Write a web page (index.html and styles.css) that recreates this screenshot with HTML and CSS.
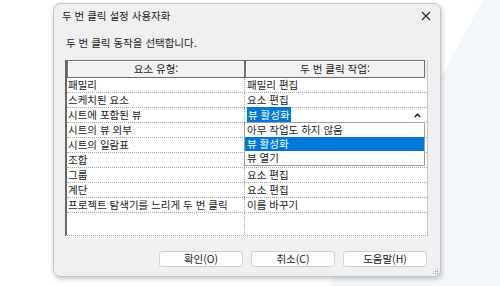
FILE: index.html
```html
<!DOCTYPE html>
<html lang="ko">
<head>
  <meta charset="UTF-8" />
  <meta name="viewport" content="width=device-width, initial-scale=1.0" />
  <title>두 번 클릭 설정 사용자화</title>
  <link rel="stylesheet" href="styles.css">
</head>
<body>
  <div class="dialog">
    <div class="titlebar">
      <span class="title">두 번 클릭 설정 사용자화</span>
      <svg class="close" width="10" height="10" viewBox="0 0 10 10">
        <path d="M1 1 L9 9 M9 1 L1 9" stroke="#222" stroke-width="1.1" fill="none" />
      </svg>
    </div>

    <p class="prompt">두 번 클릭 동작을 선택합니다.</p>

    <div class="grid">
      <div class="head-row">
        <div class="hcell">요소 유형:</div>
        <div class="hcell">두 번 클릭 작업:</div>
      </div>
      <div class="row"><div class="cell">패밀리</div><div class="cell">패밀리 편집</div></div>
      <div class="row"><div class="cell">스케치된 요소</div><div class="cell">요소 편집</div></div>
      <div class="row">
        <div class="cell">시트에 포함된 뷰</div>
        <div class="cell combo">
          <span class="sel">뷰 활성화</span>
          <svg class="caret" width="7" height="5" viewBox="0 0 7 5">
            <path d="M0.8 4 L3.5 1.2 L6.2 4" stroke="#111" stroke-width="1.4" fill="none" />
          </svg>
          <ul class="droplist">
            <li>아무 작업도 하지 않음</li>
            <li class="active">뷰 활성화</li>
            <li>뷰 열기</li>
          </ul>
        </div>
      </div>
      <div class="row"><div class="cell">시트의 뷰 외부</div><div class="cell"></div></div>
      <div class="row"><div class="cell">시트의 일람표</div><div class="cell"></div></div>
      <div class="row"><div class="cell">조합</div><div class="cell"></div></div>
      <div class="row"><div class="cell">그룹</div><div class="cell">요소 편집</div></div>
      <div class="row"><div class="cell">계단</div><div class="cell">요소 편집</div></div>
      <div class="row"><div class="cell">프로젝트 탐색기를 느리게 두 번 클릭</div><div class="cell">이름 바꾸기</div></div>
      <div class="row filler"><div class="cell"></div><div class="cell"></div></div>
    </div>

    <div class="buttons">
      <button>확인(O)</button>
      <button>취소(C)</button>
      <button>도움말(H)</button>
    </div>

    <svg class="grip" width="7" height="7" viewBox="0 0 7 7">
      <rect x="5" y="1" width="1" height="1" fill="#999" />
      <rect x="3" y="3" width="1" height="1" fill="#999" />
      <rect x="5" y="3" width="1" height="1" fill="#999" />
      <rect x="1" y="5" width="1" height="1" fill="#999" />
      <rect x="3" y="5" width="1" height="1" fill="#999" />
      <rect x="5" y="5" width="1" height="1" fill="#999" />
    </svg>
  </div>
</body>
</html>
```

FILE: styles.css
```css
body {
  margin: 0;
  padding: 3px 0 0 53px;
  height: 286px;
  box-sizing: border-box;
  overflow: hidden;
  font-family: "Noto Sans CJK KR", "Noto Sans", sans-serif;
  font-size: 10.5px;
  color: #1b1b1b;
  background: linear-gradient(118deg, #ffffff 0%, #ffffff 74%, #f3f7fb 74%);
}

.dialog {
  position: relative;
  width: 388px;
  height: 274px;
  box-sizing: border-box;
  display: flex;
  flex-direction: column;
  background-color: #f0f0f0;
  border: 1px solid #c4c4c4;
  border-radius: 7px;
  box-shadow: 1px 2px 5px rgba(0, 0, 0, 0.22);
}

.titlebar {
  height: 23px;
  display: flex;
  align-items: center;
  justify-content: space-between;
  padding: 0 9px 0 8px;
}

.title {
  line-height: 14px;
}

.close {
  display: block;
}

.prompt {
  margin: 9px 0 0 12px;
  line-height: 14px;
}

.grid {
  margin: 10px 0 0 11px;
  width: 363px;
  height: 176px;
  box-sizing: border-box;
  display: flex;
  flex-direction: column;
  background-color: #fff;
  border-left: 2px solid #666;
  border-right: 1px solid #c8c8c8;
  border-bottom: 1px dotted #a0a0a0;
}

.head-row {
  display: flex;
  height: 18px;
  flex-shrink: 0;
  background-color: #f0f0f0;
}

.hcell {
  box-sizing: border-box;
  width: 178px;
  border: 1px solid #6e6e6e;
  box-shadow: inset 1px 1px 0 #fff;
  background-color: #f2f2f2;
  text-align: center;
  line-height: 16px;
}

.hcell + .hcell {
  width: 180px;
}

.row {
  display: flex;
  height: 15px;
  flex-shrink: 0;
  box-sizing: border-box;
  border-bottom: 1px dotted #a8a8a8;
}

.row.filler {
  flex: 1;
  border-bottom: none;
}

.cell {
  box-sizing: border-box;
  width: 178px;
  padding-left: 1px;
  line-height: 14px;
  white-space: nowrap;
  border-right: 1px dotted #a8a8a8;
}

.cell + .cell {
  width: 182px;
  padding-left: 2px;
  border-right: none;
}

.combo {
  position: relative;
}

.sel {
  background-color: #0078d7;
  color: #fff;
  padding: 0 1px;
}

.caret {
  position: absolute;
  right: 6px;
  top: 5px;
}

.droplist {
  position: absolute;
  top: 14px;
  left: -1px;
  width: 181px;
  margin: 0;
  padding: 0;
  list-style: none;
  background-color: #fff;
  border: 1px solid #a0a0a0;
  box-sizing: border-box;
  z-index: 2;
}

.droplist li {
  height: 14px;
  line-height: 14px;
  padding-left: 2px;
}

.droplist li.active {
  background-color: #0078d7;
  color: #fff;
}

.buttons {
  display: flex;
  justify-content: flex-end;
  gap: 8px;
  margin: 15px 13px 0 0;
}

button {
  width: 84px;
  height: 16px;
  padding: 0;
  font-family: inherit;
  font-size: 10.5px;
  line-height: 14px;
  color: #1b1b1b;
  background-color: #fdfdfd;
  border: 1px solid #d0d0d0;
  border-radius: 3px;
}

.grip {
  position: absolute;
  right: 1px;
  bottom: 1px;
}
```
